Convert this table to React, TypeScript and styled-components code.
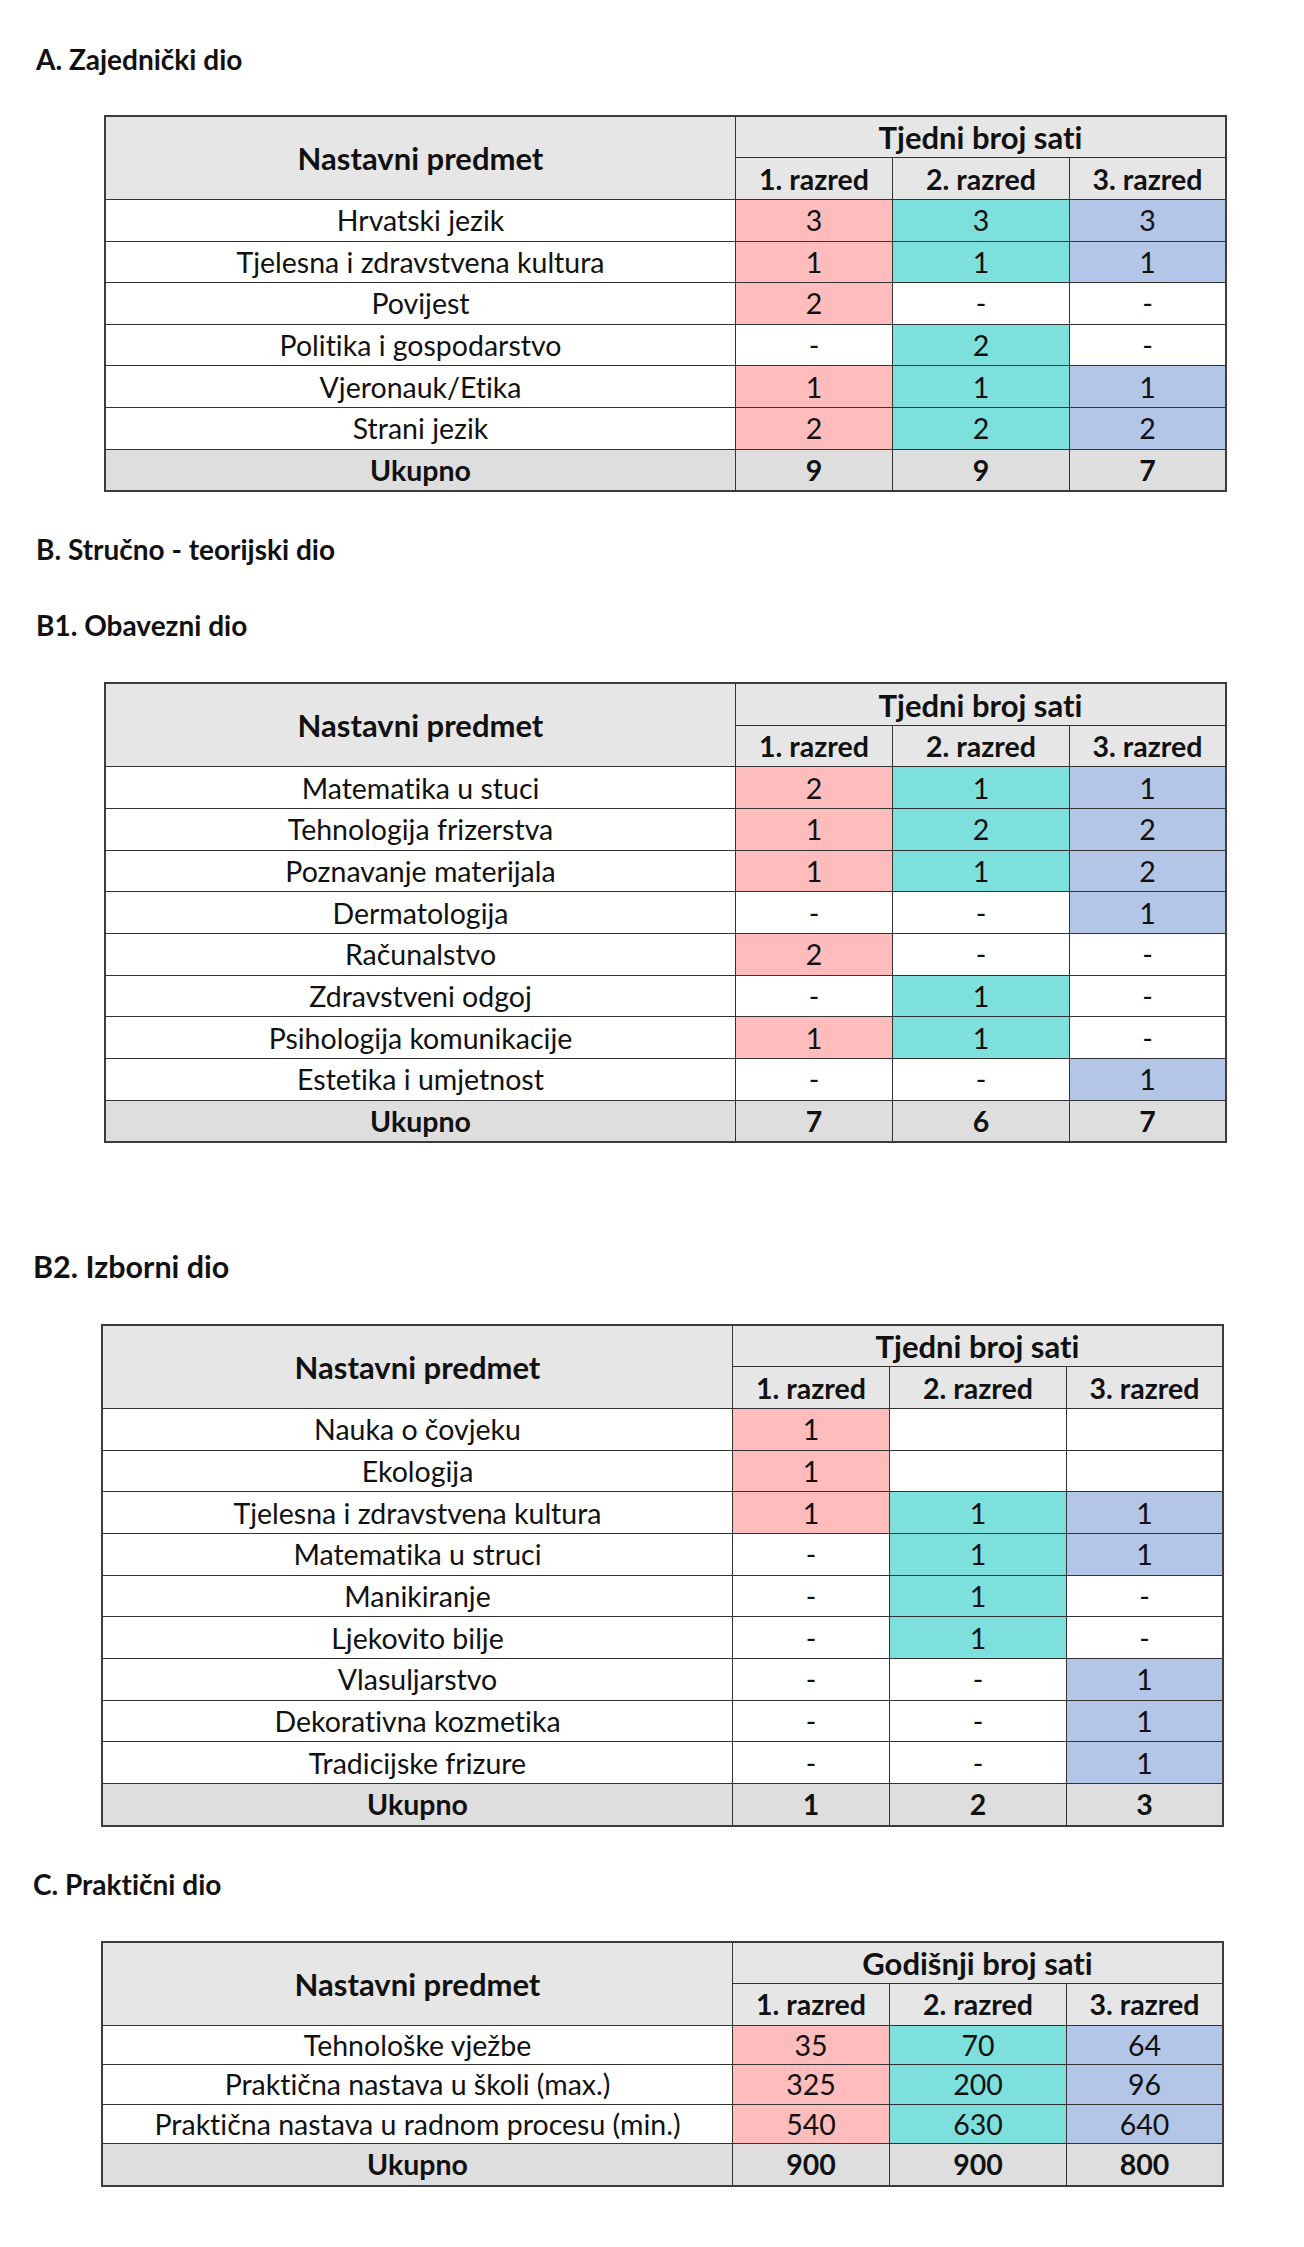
import React from 'react';
import styled, { createGlobalStyle } from 'styled-components';

const GlobalStyle = createGlobalStyle`
  html, body { margin: 0; padding: 0; background: #ffffff; }
  body {
    font-family: Lato, "Liberation Sans", sans-serif;
    color: #111111;
    font-variant-ligatures: none;
    font-feature-settings: "liga" 0, "clig" 0;
  }
`;

type Cell = string;
type Row = { name: string; values: Cell[] };
type TableData = {
  unit: string;
  rows: Row[];
  total: Cell[];
  bodyRowHeight?: number;
  totalRowHeight?: number;
};

const COLORS = ['#ffbcbc', '#7ee0dd', '#b4c6e7'];

const Page = styled.main`
  width: 1304px;
  padding: 41px 0 60px 0;
  display: flex;
  flex-direction: column;
  align-items: flex-start;
`;

const Heading = styled.h2<{ $indent: number; $gap: number; $size?: number }>`
  margin: ${(p) => p.$gap}px 0 0 ${(p) => p.$indent}px;
  font-size: ${(p) => p.$size ?? 28}px;
  line-height: 36px;
  font-weight: 700;
  color: #111111;
`;

const Grid = styled.table<{ $indent: number; $gap: number }>`
  margin: ${(p) => p.$gap}px 0 0 ${(p) => p.$indent}px;
  border-collapse: separate;
  border-spacing: 0;
  border: 2px solid #3c3c3c;
  table-layout: fixed;
  width: 1123px;
  font-size: 28.5px;

  th, td {
    border-right: 1px solid #333333;
    border-bottom: 1px solid #333333;
    padding: 0 4px;
    text-align: center;
    vertical-align: middle;
    white-space: nowrap;
    line-height: 30px;
  }
  th:last-child, td:last-child { border-right: none; }
  tbody tr:last-child td, tbody tr:last-child th { border-bottom: none; }
`;

const HeadRow = styled.tr<{ $h: number }>`
  height: ${(p) => p.$h}px;
  background: #e7e6e6;
`;

const HeadCell = styled.th<{ $big?: boolean }>`
  font-weight: 700;
  font-size: ${(p) => (p.$big ? 31 : 28.5)}px;
  color: #111111;
`;

const BodyRow = styled.tr<{ $h: number }>`
  height: ${(p) => p.$h}px;
`;

const NameCell = styled.td`
  font-weight: 400;
  background: #ffffff;
`;

const ValueCell = styled.td<{ $bg: string }>`
  font-weight: 400;
  background: ${(p) => p.$bg};
`;

const TotalRow = styled.tr<{ $h: number }>`
  height: ${(p) => p.$h}px;
  background: #dedede;
`;

const TotalCell = styled.td`
  font-weight: 700;
`;

function HoursTable({ data, indent, gap }: { data: TableData; indent: number; gap: number }) {
  const h = data.bodyRowHeight ?? 41.67;
  const th = data.totalRowHeight ?? 40.7;
  return (
    <Grid $indent={indent} $gap={gap}>
      <colgroup>
        <col style={{ width: 630 }} />
        <col style={{ width: 157 }} />
        <col style={{ width: 177 }} />
        <col style={{ width: 155 }} />
      </colgroup>
      <thead>
        <HeadRow $h={41.2}>
          <HeadCell $big rowSpan={2}>Nastavni predmet</HeadCell>
          <HeadCell $big colSpan={3}>{data.unit}</HeadCell>
        </HeadRow>
        <HeadRow $h={41.67}>
          <HeadCell>1. razred</HeadCell>
          <HeadCell>2. razred</HeadCell>
          <HeadCell>3. razred</HeadCell>
        </HeadRow>
      </thead>
      <tbody>
        {data.rows.map((r) => (
          <BodyRow key={r.name} $h={h}>
            <NameCell>{r.name}</NameCell>
            {r.values.map((v, i) => (
              <ValueCell key={i} $bg={v !== '-' && v !== '' ? COLORS[i] : '#ffffff'}>
                {v}
              </ValueCell>
            ))}
          </BodyRow>
        ))}
        <TotalRow $h={th}>
          <TotalCell>Ukupno</TotalCell>
          {data.total.map((v, i) => (
            <TotalCell key={i}>{v}</TotalCell>
          ))}
        </TotalRow>
      </tbody>
    </Grid>
  );
}

const tableA: TableData = {
  unit: 'Tjedni broj sati',
  rows: [
    { name: 'Hrvatski jezik', values: ['3', '3', '3'] },
    { name: 'Tjelesna i zdravstvena kultura', values: ['1', '1', '1'] },
    { name: 'Povijest', values: ['2', '-', '-'] },
    { name: 'Politika i gospodarstvo', values: ['-', '2', '-'] },
    { name: 'Vjeronauk/Etika', values: ['1', '1', '1'] },
    { name: 'Strani jezik', values: ['2', '2', '2'] },
  ],
  total: ['9', '9', '7'],
};

const tableB1: TableData = {
  unit: 'Tjedni broj sati',
  rows: [
    { name: 'Matematika u stuci', values: ['2', '1', '1'] },
    { name: 'Tehnologija frizerstva', values: ['1', '2', '2'] },
    { name: 'Poznavanje materijala', values: ['1', '1', '2'] },
    { name: 'Dermatologija', values: ['-', '-', '1'] },
    { name: 'Računalstvo', values: ['2', '-', '-'] },
    { name: 'Zdravstveni odgoj', values: ['-', '1', '-'] },
    { name: 'Psihologija komunikacije', values: ['1', '1', '-'] },
    { name: 'Estetika i umjetnost', values: ['-', '-', '1'] },
  ],
  total: ['7', '6', '7'],
};

const tableB2: TableData = {
  unit: 'Tjedni broj sati',
  rows: [
    { name: 'Nauka o čovjeku', values: ['1', '', ''] },
    { name: 'Ekologija', values: ['1', '', ''] },
    { name: 'Tjelesna i zdravstvena kultura', values: ['1', '1', '1'] },
    { name: 'Matematika u struci', values: ['-', '1', '1'] },
    { name: 'Manikiranje', values: ['-', '1', '-'] },
    { name: 'Ljekovito bilje', values: ['-', '1', '-'] },
    { name: 'Vlasuljarstvo', values: ['-', '-', '1'] },
    { name: 'Dekorativna kozmetika', values: ['-', '-', '1'] },
    { name: 'Tradicijske frizure', values: ['-', '-', '1'] },
  ],
  total: ['1', '2', '3'],
};

const tableC: TableData = {
  unit: 'Godišnji broj sati',
  bodyRowHeight: 39.5,
  totalRowHeight: 40.9,
  rows: [
    { name: 'Tehnološke vježbe', values: ['35', '70', '64'] },
    { name: 'Praktična nastava u školi (max.)', values: ['325', '200', '96'] },
    { name: 'Praktična nastava u radnom procesu (min.)', values: ['540', '630', '640'] },
  ],
  total: ['900', '900', '800'],
};

export default function App() {
  return (
    <>
      <GlobalStyle />
      <Page>
        <Heading $indent={36} $gap={0}>A. Zajednički dio</Heading>
        <HoursTable data={tableA} indent={104} gap={38} />
        <Heading $indent={36} $gap={39}>B. Stručno - teorijski dio</Heading>
        <Heading $indent={36} $gap={40}>B1. Obavezni dio</Heading>
        <HoursTable data={tableB1} indent={104} gap={39} />
        <Heading $indent={33} $gap={104.5} $size={30.5}>B2. Izborni dio</Heading>
        <HoursTable data={tableB2} indent={101} gap={40.5} />
        <Heading $indent={33} $gap={39.3}>C. Praktični dio</Heading>
        <HoursTable data={tableC} indent={101} gap={38.7} />
      </Page>
    </>
  );
}
